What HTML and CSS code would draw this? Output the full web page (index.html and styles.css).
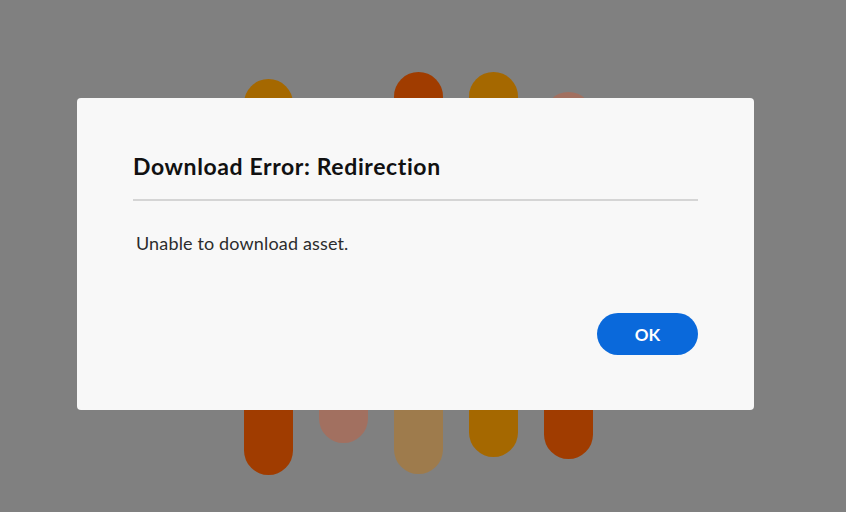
FILE: index.html
```html
<!DOCTYPE html>
<html lang="en">
<head>
<meta charset="utf-8">
<title>Download Error</title>
<link rel="stylesheet" href="styles.css">
</head>
<body>
<div class="stage">
  <div class="col col1">
    <div class="pill amber top"></div>
    <div class="pill rust bottom"></div>
  </div>
  <div class="col col2">
    <div class="pill rose bottom"></div>
  </div>
  <div class="col col3">
    <div class="pill rust top"></div>
    <div class="pill tan bottom"></div>
  </div>
  <div class="col col4">
    <div class="pill amber top"></div>
    <div class="pill amber bottom"></div>
  </div>
  <div class="col col5">
    <div class="pill rose top"></div>
    <div class="pill rust bottom"></div>
  </div>
</div>

<div class="dialog" role="alertdialog" aria-labelledby="dlg-title">
  <h2 class="dialog-title" id="dlg-title">Download Error: Redirection</h2>
  <hr class="dialog-divider">
  <p class="dialog-body">Unable to download asset.</p>
  <div class="dialog-footer">
    <button class="btn-primary" type="button">OK</button>
  </div>
</div>
</body>
</html>
```
FILE: styles.css
```css
* { box-sizing: border-box; }

html, body {
  margin: 0;
  padding: 0;
}

body {
  width: 846px;
  height: 512px;
  background: #808080;
  font-family: Lato, "Noto Sans", "Liberation Sans", sans-serif;
  overflow: hidden;
  position: relative;
}

/* background loader bars */
.stage {
  display: flex;
  gap: 26px;
  padding-left: 244px;
}

.col {
  display: flex;
  flex-direction: column;
  width: 49px;
}

.pill {
  width: 49px;
  border-radius: 24.5px;
}

.amber { background: #a56800; }
.rust  { background: #a03c00; }
.rose  { background: #a27060; }
.tan   { background: #9e7b4c; }

.col1 .top { margin-top: 79px; height: 171px; }
.col1 .bottom { height: 225px; }

.col2 .bottom { margin-top: 250px; height: 193px; }

.col3 .top { margin-top: 72px; height: 178px; }
.col3 .bottom { height: 224px; }

.col4 .top { margin-top: 72px; height: 178px; }
.col4 .bottom { height: 207px; }

.col5 .top { margin-top: 92px; height: 158px; }
.col5 .bottom { height: 209px; }

/* dialog */
.dialog {
  position: absolute;
  left: 77px;
  top: 98px;
  width: 677px;
  height: 312px;
  background: #f8f8f8;
  border-radius: 4px;
  padding: 55px 56px 55px 56px;
  display: flex;
  flex-direction: column;
}

.dialog-title {
  margin: 0;
  font-size: 23px;
  line-height: 27px;
  font-weight: 700;
  letter-spacing: 0.6px;
  color: #111;
}

.dialog-divider {
  margin: 19px 0 0;
  border: 0;
  height: 2px;
  background: #d5d5d5;
}

.dialog-body {
  margin: 30px 0 0 3px;
  font-size: 18px;
  line-height: 24px;
  letter-spacing: 0.15px;
  color: #2c2c2c;
}

.dialog-footer {
  margin-top: auto;
  display: flex;
  justify-content: flex-end;
}

.btn-primary {
  width: 101px;
  height: 42px;
  border: 0;
  border-radius: 21px;
  background: #0a69db;
  color: #fff;
  font-family: inherit;
  font-size: 17px;
  font-weight: 700;
  padding: 0;
}
```
